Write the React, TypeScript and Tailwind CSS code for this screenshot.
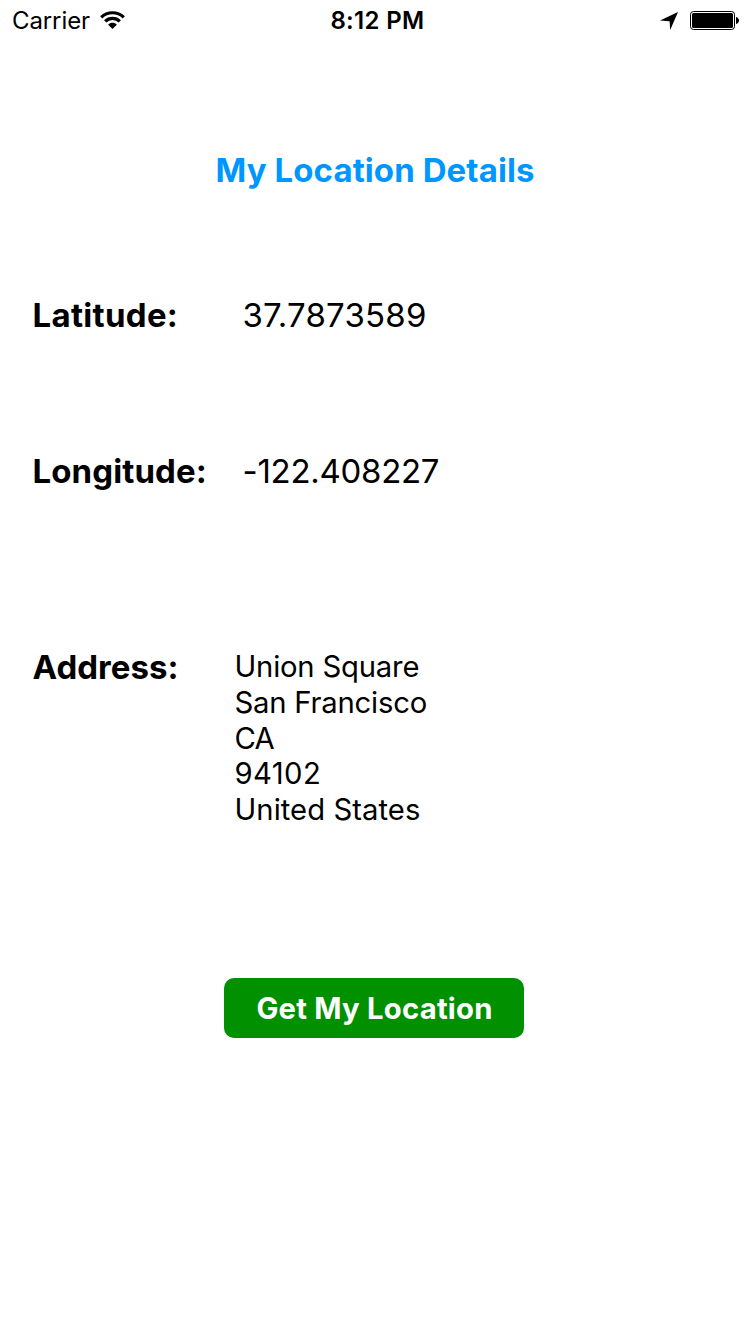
import React from "react";

const address = [
  { text: "Union Square", tracking: "tracking-[-0.2px]" },
  { text: "San Francisco", tracking: "tracking-[-0.22px]" },
  { text: "CA", tracking: "tracking-[-0.8px]" },
  { text: "94102", tracking: "tracking-[0.4px]" },
  { text: "United States", tracking: "tracking-[0.05px]" },
];

function StatusBar() {
  return (
    <header className="grid h-[42px] grid-cols-3 items-center pl-3 pr-[11px] text-2xl leading-[42px]">
      <div className="flex items-center gap-[10px]">
        <span className="tracking-[-0.1px]">Carrier</span>
        <svg className="-mt-[2px]" width="25" height="18" viewBox="0 0 25 18" fill="none" stroke="black" strokeWidth="3.2">
          <path d="M1.2 6.4C7.5.2 17.5.2 23.8 6.4" />
          <path d="M5.2 10.4c4-4 10.6-4 14.6 0" />
          <path d="M12.5 18 8.2 13.7c2.3-2.5 6.3-2.5 8.6 0z" fill="black" stroke="none" />
        </svg>
      </div>
      <span className="pl-1 text-center font-semibold tracking-[0.35px]">8:12 PM</span>
      <div className="flex items-center justify-end gap-3">
        <svg width="18" height="18" viewBox="0 0 18 18"><path d="M18 0 0 8.5 9.6 9.3 10.2 18z" /></svg>
        <svg width="49" height="20" viewBox="0 0 49 20">
          <rect x=".5" y=".5" width="44" height="18" rx="3" fill="none" stroke="black" />
          <rect x="2" y="2" width="41" height="15" rx="1.5" />
          <path d="M46 6c4 1 4 6 0 7z" />
        </svg>
      </div>
    </header>
  );
}

export default function App() {
  return (
    <main className="flex h-[1334px] w-[750px] flex-col bg-white font-[Inter,sans-serif] text-black">
      <StatusBar />
      <h1 className="mt-[108px] text-center text-[33px] font-bold leading-10 tracking-[0.08px] text-[#0096ff]">My Location Details</h1>
      <dl className="mt-[105px] pl-[32.5px] text-[33px] leading-10">
        <div className="flex">
          <dt className="w-[210px] font-bold tracking-[0.3px]">Latitude:</dt>
          <dd className="tracking-[0.2px]">37.7873589</dd>
        </div>
        <div className="mt-[116px] flex">
          <dt className="w-[210px] font-bold tracking-[0.1px]">Longitude:</dt>
          <dd className="tracking-[-0.28px]">-122.408227</dd>
        </div>
        <div className="mt-[156px] flex">
          <dt className="w-[202px] font-bold tracking-[0.02px]">Address:</dt>
          <dd className="pt-[2px] text-[29.25px] leading-[35.8px]">
            {address.map(({ text, tracking }) => <div key={text} className={tracking}>{text}</div>)}
          </dd>
        </div>
      </dl>
      <button className="ml-[224px] mt-[150px] h-[60px] w-[300px] rounded-[10px] bg-[#009000] pl-[7px] pr-[6px] pt-[2px] text-[29.25px] font-bold tracking-[0.22px] text-white">Get My Location</button>
    </main>
  );
}
